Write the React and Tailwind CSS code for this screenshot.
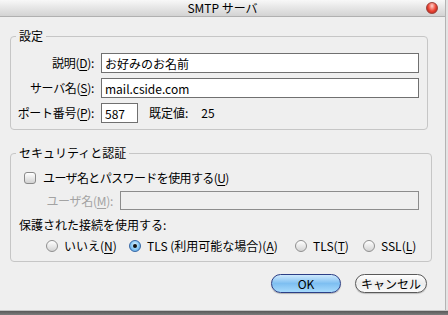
import React from 'react';

const K = ({ k }) => <span className="underline underline-offset-[2px]">{k}</span>;

const Row = ({ label, k, labelW = 'w-[83px]', disabled, children }) => (
  <div className="flex items-center">
    <span className={`${labelW} mr-[7px] text-right whitespace-nowrap tracking-[-0.3px] ${disabled ? 'text-[#a3a3a3]' : ''}`}>
      {label}(<K k={k} />):
    </span>
    {children}
  </div>
);

const Radio = ({ checked, w, children }) => (
  <div className={`flex items-center ${w}`}>
    {checked ? (
      <span className="w-[12px] h-[12px] rounded-full border border-[#3d6aa6] bg-[#6fb6ee] bg-radial-[at_50%_40%] from-[#e4f4ff] via-[#8ccbf5] to-[#3f8fd6] flex items-center justify-center">
        <span className="w-[4px] h-[4px] rounded-full bg-[#111]" />
      </span>
    ) : (
      <span className="w-[12px] h-[12px] rounded-full border border-[#8f8f8f] bg-linear-to-b from-[#ffffff] to-[#d4d4d4]" />
    )}
    <span className="ml-[6px] whitespace-nowrap">{children}</span>
  </div>
);

export default function App() {
  return (
    <div className="w-[448px] h-[315px] bg-[#e4e4e4] overflow-hidden flex flex-col font-['Noto_Sans_CJK_JP','Liberation_Sans',sans-serif] text-[12px] leading-[14px] text-black">
      <div className="w-[446px] h-[310px] bg-[#efefef] border-r border-[#b4b4b4] flex flex-col">
        {/* title bar */}
        <div className="relative h-[17px] flex items-center justify-center bg-linear-to-b from-[#f8f8f8] to-[#d3d3d3] border-b border-[#b0b0b0]">
          <span>SMTP サーバ</span>
          <span className="absolute right-[7px] top-[2px] w-[12px] h-[12px] rounded-full border border-[#9a4a44] bg-[#e23a2c] bg-radial-[at_50%_30%] from-[#ffd2cc] via-[#ee4a3a] to-[#a30e04]" />
        </div>

        <div className="px-[10px]">
          {/* 設定 */}
          <fieldset className="mt-[12px] w-[418px] border border-[#c6c6c6] rounded-[4px] pr-[8px] pb-[6px]">
            <legend className="ml-[5px] px-[3px] leading-[14px]">設定</legend>
            <div className="flex flex-col gap-[5px] pt-[10px]">
              <Row label="説明" k="D">
                <input readOnly value="お好みのお名前" className="w-[318px] h-[20px] px-[3px] bg-white border border-[#707070] outline-none" />
              </Row>
              <Row label="サーバ名" k="S">
                <input readOnly value="mail.cside.com" className="w-[318px] h-[20px] px-[3px] bg-white border border-[#707070] outline-none" />
              </Row>
              <Row label="ポート番号" k="P">
                <input readOnly value="587" className="w-[37px] h-[20px] px-[3px] bg-white border border-[#707070] outline-none" />
                <span className="ml-[11px]">既定値:</span>
                <span className="ml-[13px]">25</span>
              </Row>
            </div>
          </fieldset>

          {/* セキュリティと認証 */}
          <fieldset className="mt-[16px] w-[418px] border border-[#c6c6c6] rounded-[4px] pr-[8px] pb-[8px]">
            <legend className="ml-[5px] px-[3px] leading-[14px]">セキュリティと認証</legend>
            <div className="flex items-center pt-[11px] pl-[13px] h-[25px]">
              <span className="w-[12px] h-[12px] rounded-[3px] border border-[#8a8a8a] bg-linear-to-b from-[#ffffff] to-[#d2d2d2]" />
              <span className="ml-[7px] tracking-[-0.6px]">ユーザ名とパスワードを使用する(<K k="U" />)</span>
            </div>
            <div className="mt-[6px]">
              <Row label="ユーザ名" k="M" labelW="w-[102px]" disabled>
                <div className="w-[299px] h-[19px] border border-[#8c8c8c] bg-[#efefef]" />
              </Row>
            </div>
            <div className="mt-[8px] pl-[8px]">保護された接続を使用する:</div>
            <div className="mt-[7px] pl-[35px] flex items-center">
              <Radio w="w-[83px]">いいえ(<K k="N" />)</Radio>
              <Radio w="w-[166px]" checked>TLS (利用可能な場合)(<K k="A" />)</Radio>
              <Radio w="w-[68px]">TLS(<K k="T" />)</Radio>
              <Radio w="w-[60px]">SSL(<K k="L" />)</Radio>
            </div>
          </fieldset>

          {/* buttons */}
          <div className="mt-[12px] w-[418px] pr-[1px] flex justify-end gap-[14px]">
            <button className="w-[70px] h-[19px] rounded-full border border-[#2c3f86] bg-linear-to-b from-[#cde9fd] via-[#7ebff1] to-[#a6dafc] shadow-[0_1px_1px_rgba(0,0,0,0.25)] leading-[17px]">
              OK
            </button>
            <button className="w-[72px] h-[19px] rounded-full border border-[#5a5a5a] bg-linear-to-b from-[#ffffff] via-[#ececec] to-[#fafafa] shadow-[0_1px_1px_rgba(0,0,0,0.2)] leading-[17px]">
              キャンセル
            </button>
          </div>
        </div>
      </div>
      <div className="h-[5px] bg-linear-to-b from-[#595959] to-[#7c7c7c] border-t border-[#c4c4c4]" />
    </div>
  );
}
